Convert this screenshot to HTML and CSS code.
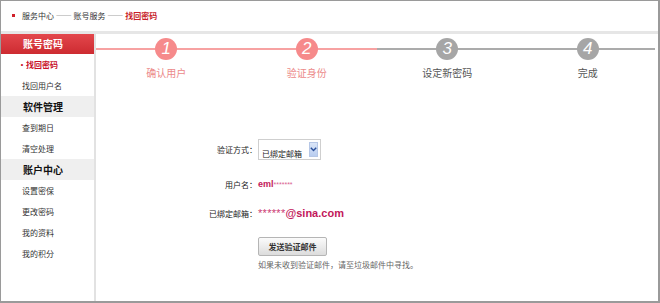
FILE: index.html
```html
<!DOCTYPE html>
<html lang="zh-CN">
<head>
  <meta charset="UTF-8">
  <title>找回密码 - 账号服务</title>
  <link rel="stylesheet" href="styles.css">
</head>
<body>
  <div class="frame">
    <div class="topbar">
      <span class="bullet"></span>
      <span>服务中心 —— 账号服务 —— <b class="current">找回密码</b></span>
    </div>

    <div class="content">
      <ul class="sidenav">
        <li class="nav-head">账号密码</li>
        <li class="nav-item active">·找回密码</li>
        <li class="nav-item">找回用户名</li>
        <li class="nav-group">软件管理</li>
        <li class="nav-item">查到期日</li>
        <li class="nav-item">清空处理</li>
        <li class="nav-group">账户中心</li>
        <li class="nav-item">设置密保</li>
        <li class="nav-item">更改密码</li>
        <li class="nav-item">我的资料</li>
        <li class="nav-item">我的积分</li>
      </ul>

      <div class="main">
        <ol class="steps">
          <li class="step done"><span class="num">1</span><span class="step-label">确认用户</span></li>
          <li class="step done"><span class="num">2</span><span class="step-label">验证身份</span></li>
          <li class="step"><span class="num">3</span><span class="step-label">设定新密码</span></li>
          <li class="step last"><span class="num">4</span><span class="step-label">完成</span></li>
        </ol>

        <form class="verify" onsubmit="return false">
          <div class="field field-select">
            <label class="field-label">验证方式：</label>
            <div class="select">
              <span class="select-text">已绑定邮箱</span>
              <span class="select-arrow">
                <svg width="7" height="5" viewBox="0 0 7 5"><path d="M0.8 0.8 L3.5 3.6 L6.2 0.8" fill="none" stroke="#2a4f9a" stroke-width="1.4"/></svg>
              </span>
            </div>
          </div>
          <div class="field field-user">
            <label class="field-label">用户名：</label>
            <span class="value value-user">eml<span class="mask">*******</span></span>
          </div>
          <div class="field field-mail">
            <label class="field-label">已绑定邮箱：</label>
            <span class="value value-mail"><span class="mask">******</span>@sina.com</span>
          </div>
          <div class="field field-btn">
            <span class="field-label"></span>
            <button class="send-btn" type="button">发送验证邮件</button>
          </div>
          <div class="field field-hint">
            <span class="field-label"></span>
            <span class="hint">如果未收到验证邮件，请至垃圾邮件中寻找。</span>
          </div>
        </form>
      </div>
    </div>
  </div>
</body>
</html>
```

FILE: styles.css
```css
* {
  box-sizing: border-box;
}
body {
  margin: 0;
  font-family: "Noto Sans CJK SC", "Liberation Sans", sans-serif;
  color: #333;
  background: #fff;
}
.frame {
  width: 660px;
  height: 303px;
  border: 1px solid #9a9a9a;
  border-right-width: 2px;
  border-bottom-width: 2px;
  display: flex;
  flex-direction: column;
}
.topbar {
  height: 33px;
  border-bottom: 3px solid #e6e6e6;
  display: flex;
  align-items: center;
  padding-left: 11px;
  padding-bottom: 1px;
  font-size: 8px;
  color: #333;
}
.bullet {
  width: 3px;
  height: 3px;
  background: #d0202a;
  margin-right: 7px;
}
.current {
  color: #c81e2a;
}
.content {
  flex: 1;
  display: flex;
}

/* side navigation */
.sidenav {
  list-style: none;
  margin: 0;
  padding: 0;
  width: 95px;
  border-right: 2px solid #e2e2e2;
}
.nav-head {
  height: 20px;
  line-height: 20px;
  padding-left: 22px;
  font-size: 10px;
  font-weight: bold;
  color: #fff;
  background: linear-gradient(#e3474c, #cd2b31);
}
.nav-item {
  height: 21px;
  line-height: 21px;
  padding-left: 21px;
  font-size: 8px;
  color: #333;
}
.nav-item.active {
  padding-left: 17px;
  color: #c8102a;
  font-weight: bold;
}
.nav-group {
  height: 21px;
  line-height: 21px;
  padding-left: 22px;
  font-size: 10px;
  font-weight: bold;
  color: #111;
  background: #efefef;
}

/* steps */
.main {
  flex: 1;
}
.steps {
  list-style: none;
  margin: 0;
  padding: 0;
  display: grid;
  grid-template-columns: repeat(4, 1fr);
}
.step {
  display: flex;
  flex-direction: column;
  align-items: center;
  padding-top: 4px;
  background: linear-gradient(#ababab, #ababab) no-repeat 0 14px / 100% 2px;
}
.step.done {
  background-image: linear-gradient(#f7a2a2, #f7a2a2);
}
.step.last {
  background-size: calc(100% - 3px) 2px;
}
.num {
  width: 22px;
  height: 22px;
  border-radius: 50%;
  background: #a6a6a6;
  color: #fff;
  font-family: "Liberation Sans", Arial, sans-serif;
  font-style: italic;
  font-size: 17px;
  line-height: 22px;
  text-align: center;
}
.step.done .num {
  background: #f68a8b;
}
.step-label {
  margin-top: 7px;
  font-size: 10px;
  line-height: 12px;
  color: #555;
}
.step.done .step-label {
  color: #ec8a8a;
}

/* verify form */
.verify {
  margin-top: 60px;
  font-size: 8px;
}
.field {
  display: flex;
  align-items: center;
}
.field-label {
  width: 161px;
  text-align: right;
  color: #222;
}
.field-select {
  height: 21px;
}
.field-user {
  height: 16px;
  margin-top: 16px;
}
.field-mail {
  height: 16px;
  margin-top: 13px;
}
.field-btn {
  margin-top: 16px;
}
.field-hint {
  margin-top: 3px;
}
.select {
  margin-left: 1px;
  width: 63px;
  height: 21px;
  border: 1px solid #cfcfcf;
  display: flex;
  align-items: stretch;
  padding: 2px;
}
.select-text {
  flex: 1;
  padding-left: 1px;
  padding-top: 6px;
  font-size: 8px;
  color: #222;
}
.select-arrow {
  width: 9px;
  display: flex;
  align-items: center;
  justify-content: center;
  background: linear-gradient(#dbe6f8, #b9cdf0);
  border: 1px solid #b6c7e6;
}
.value {
  margin-left: 1px;
  font-family: "Liberation Sans", Arial, sans-serif;
  font-weight: bold;
  color: #c2185b;
}
.value-user {
  font-size: 9px;
}
.value-user .mask {
  font-size: 7px;
  font-weight: normal;
  color: #d9628f;
}
.value-mail {
  font-size: 11px;
}
.value-mail .mask {
  font-weight: normal;
  letter-spacing: 0.3px;
  color: #cc3a72;
}
.send-btn {
  margin-left: 1px;
  width: 69px;
  height: 19px;
  padding: 0;
  border: 1px solid #b5b5b5;
  border-radius: 2px;
  background: linear-gradient(#fbfbfb, #dcdcdc);
  font-family: "Noto Sans CJK SC", sans-serif;
  font-size: 8px;
  font-weight: bold;
  color: #333;
  cursor: pointer;
}
.hint {
  margin-left: 1px;
  line-height: 12px;
  color: #666;
}
```
